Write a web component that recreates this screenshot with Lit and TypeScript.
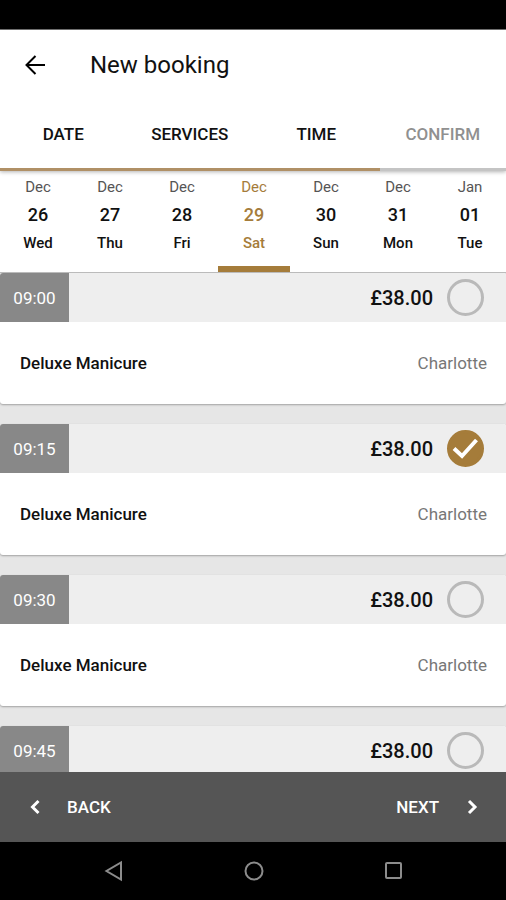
import { LitElement, html, css, svg, nothing } from "lit";
import { customElement, property, state } from "lit/decorators.js";
import { classMap } from "lit/directives/class-map.js";

interface Day {
  month: string;
  date: string;
  weekday: string;
}

interface Slot {
  time: string;
  price: string;
  service?: string;
  staff?: string;
}

const STEPS = ["DATE", "SERVICES", "TIME", "CONFIRM"];

const DAYS: Day[] = [
  { month: "Dec", date: "26", weekday: "Wed" },
  { month: "Dec", date: "27", weekday: "Thu" },
  { month: "Dec", date: "28", weekday: "Fri" },
  { month: "Dec", date: "29", weekday: "Sat" },
  { month: "Dec", date: "30", weekday: "Sun" },
  { month: "Dec", date: "31", weekday: "Mon" },
  { month: "Jan", date: "01", weekday: "Tue" },
];

const SLOTS: Slot[] = [
  { time: "09:00", price: "£38.00", service: "Deluxe Manicure", staff: "Charlotte" },
  { time: "09:15", price: "£38.00", service: "Deluxe Manicure", staff: "Charlotte" },
  { time: "09:30", price: "£38.00", service: "Deluxe Manicure", staff: "Charlotte" },
  { time: "09:45", price: "£38.00" },
];

const buttonReset = css`
  * {
    box-sizing: border-box;
  }
  button {
    margin: 0;
    padding: 0;
    border: 0;
    background: none;
    color: inherit;
    font: inherit;
    cursor: pointer;
  }
  svg {
    display: block;
    fill: none;
  }
`;

@customElement("time-slots")
class TimeSlots extends LitElement {
  @property({ attribute: false }) slots: Slot[] = [];
  @state() private selected = "09:15";

  static styles = [
    buttonReset,
    css`
      :host {
        display: flex;
        flex-direction: column;
        gap: 20px;
      }
      .card {
        display: block;
        flex: none;
        background: #fff;
        border-radius: 3px;
        overflow: hidden;
        box-shadow: 0 1px 2px rgba(0, 0, 0, 0.3);
        cursor: pointer;
      }
      .head {
        display: flex;
        align-items: center;
        height: 49px;
        padding-right: 22px;
        background: #eee;
      }
      .time {
        display: flex;
        align-items: center;
        justify-content: center;
        align-self: stretch;
        width: 69px;
        background: #888;
        color: #fff;
        font-size: 17px;
      }
      .price {
        margin-left: auto;
        margin-right: 14px;
        font-size: 20px;
        font-weight: 500;
      }
      .pick {
        display: grid;
      }
      .pick > * {
        grid-area: 1 / 1;
      }
      .radio {
        appearance: none;
        width: 37px;
        height: 37px;
        margin: 0;
        border: 3px solid #b9b9b9;
        border-radius: 50%;
        cursor: pointer;
      }
      .radio:checked {
        border-color: #a57c3a;
        background: #a57c3a;
      }
      .tick {
        pointer-events: none;
        stroke: #fff;
        stroke-width: 4;
      }
      .body {
        display: flex;
        align-items: center;
        justify-content: space-between;
        height: 82px;
        padding: 0 19px 0 20px;
        font-size: 17px;
      }
      .service {
        font-weight: 500;
      }
      .staff {
        color: #777;
      }
    `,
  ];

  render() {
    return this.slots.map((s) => {
      const selected = s.time === this.selected;
      return html`
        <label class="card">
          <span class="head">
            <span class="time">${s.time}</span>
            <span class="price">${s.price}</span>
            <span class="pick">
              <input
                class="radio"
                type="radio"
                name="slot"
                .checked=${selected}
                @change=${() => (this.selected = s.time)}
              />
              ${selected
                ? html`<svg class="tick" width="37" height="37" viewBox="0 0 37 37">
                    <path d="M7 18.500l8 7.500L29.500 10" />
                  </svg>`
                : nothing}
            </span>
          </span>
          <span class="body">
            ${s.service ? html`<span class="service">${s.service}</span>` : nothing}
            ${s.staff ? html`<span class="staff">${s.staff}</span>` : nothing}
          </span>
        </label>
      `;
    });
  }
}

@customElement("app-root")
class AppRoot extends LitElement {
  @state() private day = 3;

  static styles = [
    buttonReset,
    css`
      :host {
        display: flex;
        flex-direction: column;
        height: 100vh;
        background: #e6e6e6;
        color: #111;
        font-family: Roboto, "Liberation Sans", sans-serif;
      }
      .status {
        flex: none;
        height: 30px;
        background: #000;
        border-bottom: 1px solid #777;
      }
      .top {
        flex: none;
        position: relative;
        background: #fff;
        box-shadow: 0 1px 4px rgba(0, 0, 0, 0.3);
      }
      .bar {
        display: flex;
        align-items: center;
        gap: 43px;
        height: 70px;
        padding-left: 23px;
      }
      .title {
        margin: 0;
        font-size: 24px;
        font-weight: 400;
      }
      .back-icon {
        stroke: #000;
        stroke-width: 2;
      }
      .steps {
        display: grid;
        grid-template-columns: repeat(4, 1fr);
        height: 68px;
      }
      .step {
        font-size: 17px;
        font-weight: 500;
      }
      .step.pending {
        color: #909090;
      }
      .progress {
        height: 3px;
        background: #c4c4c4;
      }
      .done {
        width: 75%;
        height: 100%;
        background: #b09066;
      }
      .days {
        flex: none;
        display: grid;
        grid-template-columns: repeat(7, 1fr);
        padding-left: 2px;
        background: #fff;
        border-bottom: 1px solid #bbb;
      }
      .day {
        display: flex;
        flex-direction: column;
        align-items: center;
        height: 101px;
        padding-top: 2px;
        font-size: 15px;
        line-height: 28px;
        border-bottom: 6px solid transparent;
      }
      .month {
        color: #555;
      }
      .date {
        font-size: 18px;
        font-weight: 500;
      }
      .weekday {
        font-weight: 500;
      }
      .day.current,
      .day.current .month {
        color: #a57c3a;
      }
      .day.current {
        border-color: #a57c3a;
      }
      .slots {
        flex: 1;
        min-height: 0;
        overflow-y: auto;
        scrollbar-width: none;
      }
      .actions {
        flex: none;
        display: flex;
        justify-content: space-between;
        height: 70px;
        background: #555;
        color: #fff;
      }
      .action {
        display: flex;
        align-items: center;
        gap: 20px;
        padding: 0 21px;
        font-size: 17px;
        font-weight: 500;
      }
      .chevron {
        stroke: #fff;
        stroke-width: 3;
      }
      .system {
        flex: none;
        display: flex;
        align-items: center;
        justify-content: center;
        gap: 116px;
        height: 58px;
        padding-left: 2px;
        background: #000;
      }
      .system svg {
        stroke: #8c8c8c;
        stroke-width: 2;
      }
    `,
  ];

  private systemIcon(label: string, shape: unknown) {
    return html`<button aria-label=${label}>
      <svg width="24" height="24" viewBox="0 0 24 24">${shape}</svg>
    </button>`;
  }

  render() {
    return html`
      <div class="status"></div>
      <header class="top">
        <div class="bar">
          <button aria-label="Go back">
            <svg class="back-icon" width="24" height="24" viewBox="0 0 24 24">
              <path d="M22 12H4M12.500 3L3.500 12l9 9" />
            </svg>
          </button>
          <h1 class="title">New booking</h1>
        </div>
        <nav class="steps">
          ${STEPS.map(
            (name, i) => html`<button class=${classMap({ step: true, pending: i === 3 })}>${name}</button>`
          )}
        </nav>
        <div class="progress"><div class="done"></div></div>
      </header>
      <div class="days">
        ${DAYS.map(
          (d, i) => html`<button
            class=${classMap({ day: true, current: i === this.day })}
            @click=${() => (this.day = i)}
          >
            <span class="month">${d.month}</span>
            <span class="date">${d.date}</span>
            <span class="weekday">${d.weekday}</span>
          </button>`
        )}
      </div>
      <main class="slots">
        <time-slots .slots=${SLOTS}></time-slots>
      </main>
      <footer class="actions">
        <button class="action">
          <svg class="chevron" width="26" height="24" viewBox="0 0 26 24"><path d="M17.500 6l-6 6 6 6" /></svg>
          BACK
        </button>
        <button class="action">
          NEXT
          <svg class="chevron" width="26" height="24" viewBox="0 0 26 24"><path d="M10 6l6 6-6 6" /></svg>
        </button>
      </footer>
      <nav class="system">
        ${this.systemIcon("Back", svg`<path d="M19 3.500v17L4.500 12z" />`)}
        ${this.systemIcon("Home", svg`<circle cx="12" cy="12" r="8.500" />`)}
        ${this.systemIcon("Recents", svg`<rect x="4" y="4" width="15" height="15" rx="1" />`)}
      </nav>
    `;
  }
}
